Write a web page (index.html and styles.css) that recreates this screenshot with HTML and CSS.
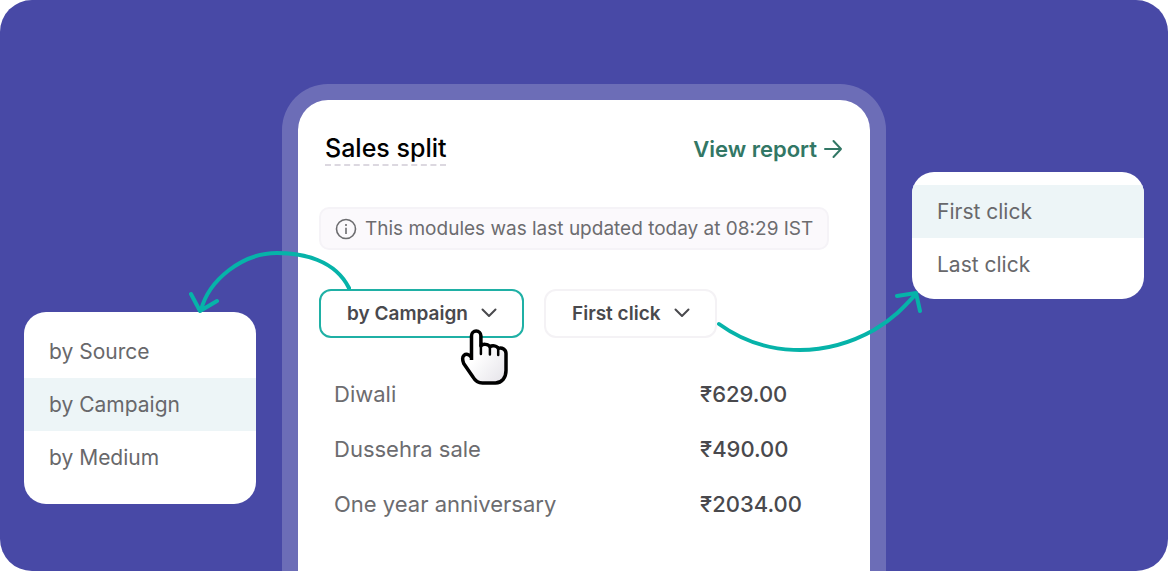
FILE: index.html
```html
<!DOCTYPE html>
<html lang="en">
<head>
    <meta charset="UTF-8">
    <meta name="viewport" content="width=device-width, initial-scale=1.0">
    <title>Sales split</title>
    <link rel="stylesheet" href="styles.css">
</head>
<body>
    <main class="stage">
        <div class="menu menu-source">
            <button type="button" class="option">by Source</button>
            <button type="button" class="option active">by Campaign</button>
            <button type="button" class="option">by Medium</button>
        </div>

        <section class="card">
            <header class="card-header">
                <h1>Sales split</h1>
                <a href="#" class="report-link">View report
                    <svg width="20" height="20" viewBox="0 0 20 20" fill="none" stroke="currentColor" stroke-width="2" stroke-linecap="round" stroke-linejoin="round"><path d="M2 10h16M10.500 2l7.500 8-7.500 8"/></svg>
                </a>
            </header>

            <p class="note">
                <svg width="22" height="22" viewBox="0 0 22 22" fill="none" stroke="currentColor" stroke-width="1.600"><circle cx="11" cy="11" r="9.500"/><path d="M11 9.800v6.200M11 6v2"/></svg>
                This modules was last updated today at 08:29 IST
            </p>

            <div class="filters">
                <div class="filter">
                    <select class="select selected" aria-label="Split by">
                        <option>by Source</option>
                        <option selected>by Campaign</option>
                        <option>by Medium</option>
                    </select>
                    <svg class="chevron" width="16" height="10" viewBox="0 0 16 10" fill="none" stroke="currentColor" stroke-width="2" stroke-linecap="round" stroke-linejoin="round"><path d="M1.500 1.500L8 8l6.500-6.500"/></svg>
                    <svg class="cursor" width="48" height="56" viewBox="0 0 48 56">
                        <defs>
                            <linearGradient id="hand" x1="0" y1="0" x2="1" y2="1">
                                <stop offset="0.400" stop-color="#fff"/>
                                <stop offset="1" stop-color="#e4e2e8"/>
                            </linearGradient>
                        </defs>
                        <path d="M11.500 31V6.800a4.700 4.700 0 0 1 9.400 0V17c1.500-2.300 7.500-2.300 9 .8 2-1.600 7-1.400 8.300 1.600 4-1.200 7.800 1.200 7.800 5.200v17c0 7-4 12.400-10.500 12.400h-13c-4.500 0-7.300-2-9.500-6L3.700 34.500c-1.500-4-1.700-6.500.3-8.200 2-1.700 4.500-1.300 7.500 2" fill="url(#hand)" stroke="#000" stroke-width="3.500" stroke-linejoin="round"/>
                        <path d="M20.900 16v9M29.900 18v7.500M38.200 20v6" fill="none" stroke="#000" stroke-width="2.500" stroke-linecap="round"/>
                    </svg>
                </div>
                <div class="filter">
                    <select class="select" aria-label="Attribution">
                        <option selected>First click</option>
                        <option>Last click</option>
                    </select>
                    <svg class="chevron" width="16" height="10" viewBox="0 0 16 10" fill="none" stroke="currentColor" stroke-width="2" stroke-linecap="round" stroke-linejoin="round"><path d="M1.500 1.500L8 8l6.500-6.500"/></svg>
                </div>
            </div>

            <table class="sales">
                <tr><th scope="row">Diwali</th><td>₹629.00</td></tr>
                <tr><th scope="row">Dussehra sale</th><td>₹490.00</td></tr>
                <tr><th scope="row">One year anniversary</th><td>₹2034.00</td></tr>
            </table>

            <!-- connectors from the filters to their menus -->
            <svg class="arrow arrow-left" width="164" height="66" viewBox="0 0 164 66"><path d="M160 38C146 10 114 3 88 3C53 3 20 30 12 60M2 44l9 17 17-10"/></svg>
            <svg class="arrow arrow-right" width="212" height="66" viewBox="0 0 212 66"><path d="M7 37C51 69 110 72 162 43C182 31 192 20 203 8M185 9l19-3 4 18"/></svg>
        </section>

        <div class="menu menu-click">
            <button type="button" class="option active">First click</button>
            <button type="button" class="option">Last click</button>
        </div>
    </main>
</body>
</html>
```
FILE: styles.css
```css
* {
    box-sizing: border-box;
}
body {
    margin: 0;
    background-color: #fff;
    font-family: Inter, "Liberation Sans", sans-serif;
    color: #6c6c6f;
}
.stage {
    display: grid;
    grid-template-columns: 232px 1fr 232px;
    column-gap: 26px;
    align-items: start;
    min-height: 100vh;
    padding: 0 24px;
    border-radius: 32px;
    background-color: #4849a6;
    overflow: hidden;
}
.menu {
    padding: 13px 0 8px;
    border-radius: 22px;
    background-color: #fff;
    overflow: hidden;
}
.menu-source {
    margin-top: 312px;
    padding-bottom: 20px;
}
.menu-click {
    margin-top: 172px;
}
.option {
    display: block;
    width: 100%;
    height: 53px;
    padding: 0 25px;
    border: none;
    background: none;
    font-family: inherit;
    font-size: 21px;
    text-align: left;
    color: #68686b;
}
.option.active {
    background-color: #edf5f7;
}
.card {
    position: relative;
    align-self: stretch;
    margin-top: 84px;
    padding: 32px 27px 0;
    border: 16px solid rgba(255, 255, 255, 0.2);
    border-bottom: none;
    border-radius: 46px 46px 0 0;
    background-color: #fff;
    background-clip: padding-box;
}
.card-header {
    display: flex;
    justify-content: space-between;
    align-items: center;
}
h1 {
    margin: 0;
    border-bottom: 2px dashed #dcd8e0;
    font-size: 25px;
    line-height: 32px;
    font-weight: 500;
    color: #000;
}
.report-link {
    display: flex;
    align-items: center;
    gap: 6px;
    font-size: 22px;
    font-weight: 600;
    color: #327765;
    text-decoration: none;
}
.note {
    display: flex;
    align-items: center;
    gap: 8px;
    width: fit-content;
    height: 43px;
    margin: 41px 0 0 -6px;
    padding: 0 14px;
    border: 2px solid #f5f3f7;
    border-radius: 10px;
    background-color: #fbf9fc;
    font-size: 19px;
    white-space: nowrap;
}
.filters {
    display: flex;
    gap: 20px;
    margin: 39px 0 0 -6px;
}
.filter {
    position: relative;
    color: #49494d;
}
.select {
    height: 49px;
    padding: 0 54px 0 26px;
    border: 2px solid #f4f2f5;
    border-radius: 12px;
    background-color: #fff;
    appearance: none;
    font-family: inherit;
    font-size: 19px;
    font-weight: 600;
    color: inherit;
}
.select.selected {
    border-color: #1fb0a5;
}
.chevron {
    position: absolute;
    top: 19px;
    right: 27px;
    pointer-events: none;
}
.cursor {
    position: absolute;
    top: 40px;
    right: 16px;
    z-index: 1;
    pointer-events: none;
}
.sales {
    width: 100%;
    margin: 28px 0 0 9px;
    border-collapse: collapse;
    font-size: 22px;
}
.sales th,
.sales td {
    height: 55px;
    padding: 0;
    text-align: left;
    font-weight: 400;
}
.sales td {
    width: 152px;
    font-weight: 500;
    color: #49494d;
}
.arrow {
    position: absolute;
    z-index: 2;
    fill: none;
    stroke: #06b3a9;
    stroke-width: 4;
    stroke-linecap: round;
    stroke-linejoin: round;
    pointer-events: none;
}
.arrow-left {
    top: 150px;
    left: -109px;
}
.arrow-right {
    top: 187px;
    right: -54px;
}
```
